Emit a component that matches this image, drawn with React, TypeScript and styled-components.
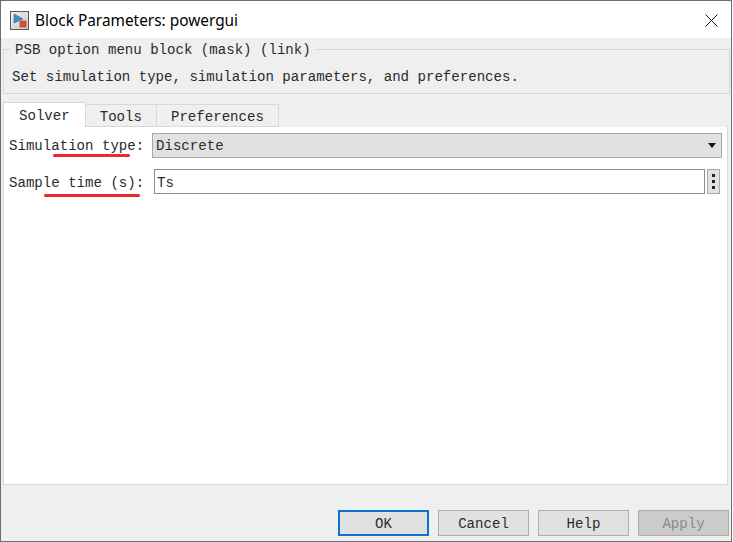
import React from 'react'
import styled, { createGlobalStyle } from 'styled-components'

const GlobalStyle = createGlobalStyle`
  html, body {
    margin: 0;
    padding: 0;
    width: 733px;
    height: 542px;
    overflow: hidden;
    background: #fff;
  }
  * {
    box-sizing: border-box;
  }
`

const BlockIcon = () => (
  <svg width="19" height="19" viewBox="0 0 19 19">
    <defs>
      <linearGradient id="bg" x1="0" y1="0" x2="1" y2="1">
        <stop offset="0" stopColor="#f4f4f4" />
        <stop offset="1" stopColor="#c4c4c4" />
      </linearGradient>
    </defs>
    <rect x="0.5" y="0.5" width="18" height="18" fill="url(#bg)" stroke="#5a5a5a" />
    <path d="M4 3 L13 8 L4 12 Z" fill="#3f8fc4" stroke="#2a6a98" strokeWidth="0.6" />
    <rect x="10" y="10" width="6" height="6" fill="#d9522b" stroke="#a83a1a" strokeWidth="0.6" />
  </svg>
)

const CloseIcon = () => (
  <svg width="13" height="13" viewBox="0 0 13 13">
    <path d="M0.5 0.5 L12.5 12.5 M12.5 0.5 L0.5 12.5" stroke="#1a1a1a" strokeWidth="1" fill="none" />
  </svg>
)

const App = () => {
  return (
    <Window>
      <GlobalStyle />
      <TitleBar>
        <BlockIcon />
        <TitleText>Block Parameters: powergui</TitleText>
        <CloseButton>
          <CloseIcon />
        </CloseButton>
      </TitleBar>
      <Body>
        <MaskGroup>
          <MaskLegend>PSB option menu block (mask) (link)</MaskLegend>
          <MaskText>Set simulation type, simulation parameters, and preferences.</MaskText>
        </MaskGroup>
        <TabBar>
          <Tab $active>Solver</Tab>
          <Tab>Tools</Tab>
          <Tab>Preferences</Tab>
        </TabBar>
        <TabPanel>
          <Row>
            <Label>
              Simulation type:
              <Underline $left={44} $width={77} $bottom={-3} />
            </Label>
            <Select>
              <span>Discrete</span>
              <Caret />
            </Select>
          </Row>
          <Row>
            <Label $drop>
              Sample time (s):
              <Underline $left={35} $width={96} $bottom={-6} />
            </Label>
            <Input>Ts</Input>
            <MoreButton>
              <Dot />
              <Dot />
              <Dot />
            </MoreButton>
          </Row>
        </TabPanel>
        <Footer>
          <Button $focused>OK</Button>
          <Button>Cancel</Button>
          <Button>Help</Button>
          <Button $disabled>Apply</Button>
        </Footer>
      </Body>
    </Window>
  )
}

const Window = styled.div`
  display: flex;
  flex-direction: column;

  width: 732px;
  height: 542px;

  border: 1px solid #6e6e6e;
  background: #efefef;
`

const TitleBar = styled.div`
  display: flex;
  align-items: center;

  padding: 1px 13px 0 9px;

  height: 37px;
  background: #fff;
`

const TitleText = styled.div`
  margin-left: 6px;

  font-family: 'Noto Sans', 'Liberation Sans', sans-serif;
  font-size: 15.4px;
  color: #000;
`

const CloseButton = styled.div`
  display: flex;

  margin-left: auto;
`

const Body = styled.div`
  display: flex;
  flex: 1;
  flex-direction: column;

  padding: 0 1px 0 2px;

  font-family: 'Liberation Mono', 'DejaVu Sans Mono', monospace;
  font-size: 14.08px;
  color: #2b2b2b;
`

const MaskGroup = styled.div`
  position: relative;

  margin-top: 11px;
  padding: 18px 8px 0 8px;

  height: 45px;
  border: 1px solid #d8d8d8;
`

const MaskLegend = styled.div`
  position: absolute;
  top: -9px;
  left: 7px;

  padding: 0 4px;

  background: #efefef;
  line-height: 18px;
  white-space: pre;
`

const MaskText = styled.div`
  line-height: 18px;
  white-space: pre;
`

const TabBar = styled.div`
  display: flex;
  align-items: flex-end;

  margin-top: 8px;
  height: 25px;
`

const Tab = styled.div<{ $active?: boolean }>`
  display: flex;
  align-items: center;
  justify-content: center;

  padding: 2px ${(p) => (p.$active ? '15px' : '14px')} 0;

  height: ${(p) => (p.$active ? '25px' : '23px')};
  border: 1px solid #d8d8d8;
  border-bottom: ${(p) => (p.$active ? 'none' : '1px solid #d8d8d8')};
  border-left: ${(p) => (p.$active ? '1px solid #d8d8d8' : 'none')};
  background: ${(p) => (p.$active ? '#fff' : '#efefef')};
`

const TabPanel = styled.div`
  display: flex;
  flex-direction: column;
  gap: 11px;

  margin-right: 2px;
  padding: 6px 5px 0 5px;

  height: 358px;
  border: 1px solid #d8d8d8;
  border-top: none;
  background: #fff;
`

const Row = styled.div`
  display: flex;
  align-items: center;

  height: 25px;
`

const Label = styled.div<{ $drop?: boolean }>`
  position: relative;

  padding-top: ${(p) => (p.$drop ? '2px' : '0')};

  width: 143px;
  flex-shrink: 0;

  white-space: pre;
`

const Underline = styled.div<{ $left: number; $width: number; $bottom: number }>`
  position: absolute;
  left: ${(p) => p.$left}px;
  bottom: ${(p) => p.$bottom}px;

  width: ${(p) => p.$width}px;
  height: 3px;
  border-radius: 2px;
  background: #f0282d;
`

const Select = styled.div`
  display: flex;
  align-items: center;
  justify-content: space-between;

  padding: 0 5px 0 3px;

  width: 570px;
  height: 25px;
  border: 1px solid #a8a8a8;
  background: #e1e1e1;
`

const Caret = styled.div`
  width: 0;
  height: 0;
  border-left: 4px solid transparent;
  border-right: 4px solid transparent;
  border-top: 5px solid #111;
`

const Input = styled.div`
  display: flex;
  align-items: center;

  margin-left: 2px;
  padding: 2px 2px 0;

  width: 551px;
  height: 25px;
  border: 1px solid #8c8c8c;
  background: #fff;
`

const MoreButton = styled.div`
  display: flex;
  flex-direction: column;
  align-items: center;
  justify-content: center;
  gap: 3px;

  margin-left: 2px;

  width: 13px;
  height: 25px;
  border: 1px solid #a8a8a8;
  background: #e1e1e1;
`

const Dot = styled.div`
  width: 3px;
  height: 3px;
  background: #222;
`

const Footer = styled.div`
  display: flex;
  justify-content: flex-end;
  gap: 9px;

  margin-top: 25px;
  padding-right: 1px;
`

const Button = styled.div<{ $focused?: boolean; $disabled?: boolean }>`
  display: flex;
  align-items: center;
  justify-content: center;

  padding-top: 2px;

  width: 91px;
  height: 26px;
  border: ${(p) => (p.$focused ? '2px solid #0a72d0' : '1px solid #adadad')};
  background: ${(p) => (p.$disabled ? '#cbcbcb' : '#e1e1e1')};
  color: ${(p) => (p.$disabled ? '#8a8a8a' : '#2b2b2b')};
`

export default App
